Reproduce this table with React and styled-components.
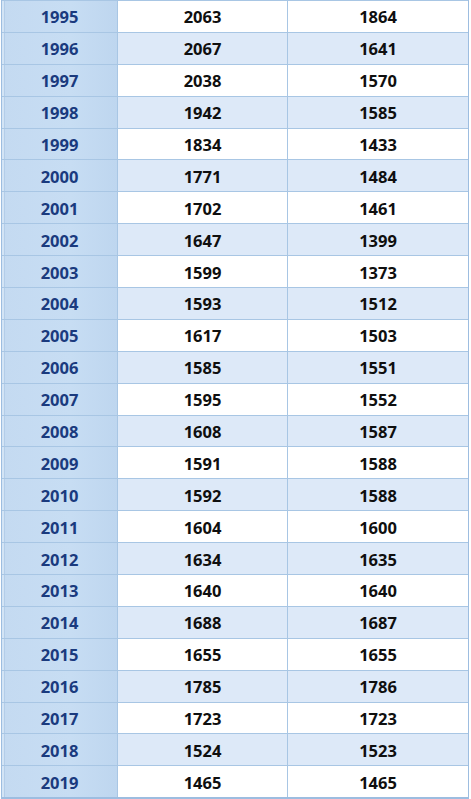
import React from "react";
import styled, { createGlobalStyle } from "styled-components";

const Global = createGlobalStyle`
  html, body { margin: 0; padding: 0; background: #ffffff; }
  body { font-family: "Open Sans", "Noto Sans", sans-serif; overflow: hidden; }
`;

const Table = styled.div`
  width: 468px;
  margin-left: 1px;
  display: grid;
  grid-template-columns: 115px 170px 1fr;
  grid-auto-rows: 31.9px;
  border-left: 1px solid #9dbde0;
  border-right: 1px solid #9dbde0;
  border-bottom: 2px solid #9dbde0;
  box-sizing: border-box;
`;

const Cell = styled.div`
  display: flex;
  align-items: center;
  justify-content: center;
  padding-top: 1px;
  font-weight: 700;
  font-size: 16.5px;
  color: #0f0f0f;
  border-top: 1px solid #a8c6e4;
  border-left: ${(p) => (p.$first ? "none" : "1px solid #a8c6e4")};
  background: ${(p) => (p.$alt ? "#dde9f8" : "#ffffff")};
  box-sizing: border-box;
`;

const YearCell = styled(Cell)`
  color: #1a3a7e;
  background: linear-gradient(to right, #c4daf1 0%, #c7ddf3 60%, #bed6ef 100%);
  box-shadow: inset 2px 0 0 #d3e4f5, inset 3px 0 0 #b3cde9;
`;

const rows = [
  [1995, 2063, 1864],
  [1996, 2067, 1641],
  [1997, 2038, 1570],
  [1998, 1942, 1585],
  [1999, 1834, 1433],
  [2000, 1771, 1484],
  [2001, 1702, 1461],
  [2002, 1647, 1399],
  [2003, 1599, 1373],
  [2004, 1593, 1512],
  [2005, 1617, 1503],
  [2006, 1585, 1551],
  [2007, 1595, 1552],
  [2008, 1608, 1587],
  [2009, 1591, 1588],
  [2010, 1592, 1588],
  [2011, 1604, 1600],
  [2012, 1634, 1635],
  [2013, 1640, 1640],
  [2014, 1688, 1687],
  [2015, 1655, 1655],
  [2016, 1785, 1786],
  [2017, 1723, 1723],
  [2018, 1524, 1523],
  [2019, 1465, 1465],
];

export default function App() {
  return (
    <>
      <Global />
      <Table>
        {rows.map(([y, a, b], i) => (
          <React.Fragment key={y}>
            <YearCell $first>{y}</YearCell>
            <Cell $alt={i % 2 === 1}>{a}</Cell>
            <Cell $alt={i % 2 === 1}>{b}</Cell>
          </React.Fragment>
        ))}
      </Table>
    </>
  );
}
